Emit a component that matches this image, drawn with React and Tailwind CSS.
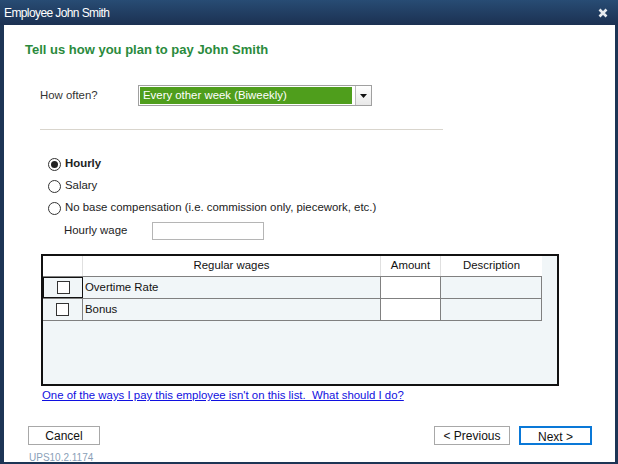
import React from "react";

const Radio = ({ checked, label, bold }) => (
  <div className="flex items-center h-[22px] shrink-0">
    <span className="w-[13px] h-[13px] rounded-full border border-[#333] bg-white flex items-center justify-center">
      {checked && <span className="w-[7px] h-[7px] rounded-full bg-[#222]" />}
    </span>
    <span className={"ml-[4px] text-[#222] " + (bold ? "font-bold" : "")}>{label}</span>
  </div>
);

const Check = () => <span className="w-[13px] h-[13px] border border-[#333] bg-white block" />;

export default function App() {
  return (
    <div
      className="w-[618px] h-[464px] flex flex-col bg-[#1d3555] overflow-hidden"
      style={{ fontFamily: '"Liberation Sans", Arial, sans-serif' }}
    >
      <div className="h-[25px] shrink-0 flex items-center justify-between pl-[4px] pr-[10px] bg-gradient-to-b from-[#284c74] to-[#1b3152]">
        <span className="text-white text-[12px] tracking-[-0.6px] leading-none">Employee John Smith</span>
        <svg width="10" height="10" viewBox="0 0 10 10">
          <path d="M1.5 1.5 L8.5 8.5 M8.5 1.5 L1.5 8.5" stroke="#e8ecf0" strokeWidth="2.6" strokeLinecap="butt" />
        </svg>
      </div>
      <div className="flex-1 min-h-0 ml-[4px] mr-[3px] mb-[2px] bg-white relative flex flex-col text-[11.4px] text-[#333] overflow-hidden">
        <div className="shrink-0 pl-[21px] pt-[17px] text-[#2a8a3c] font-bold text-[13px] leading-[16px]">
          Tell us how you plan to pay John Smith
        </div>
        <div className="shrink-0 flex items-center mt-[27px] pl-[36px]">
          <span className="w-[98px]">How often?</span>
          <div className="flex h-[21px] border border-[#a0a0a0] bg-white items-stretch w-[234px]">
            <div className="m-[1px] w-[212px] bg-[#4f9e1c] text-white pl-[3px] flex items-center">
              Every other week (Biweekly)
            </div>
            <div className="ml-auto w-[16px] border-l border-[#bbb] bg-gradient-to-b from-white to-[#e8e8e8] flex items-center justify-center">
              <svg width="7" height="4" viewBox="0 0 7 4"><path d="M0 0 H7 L3.5 4 Z" fill="#111" /></svg>
            </div>
          </div>
        </div>
        <div className="shrink-0 ml-[36px] w-[403px] h-px bg-[#d9d5cd] mt-[23px]" />
        <div className="shrink-0 pl-[44px] mt-[23px] flex flex-col">
          <Radio checked bold label="Hourly" />
          <Radio label="Salary" />
          <Radio label="No base compensation (i.e. commission only, piecework, etc.)" />
          <div className="flex items-center h-[24px] pl-[16px] shrink-0">
            <span className="w-[88px] text-[#222]">Hourly wage</span>
            <div className="w-[112px] h-[18px] border border-[#b5b5b5] bg-white" />
          </div>
        </div>
        <div className="ml-[37px] mt-[11px] w-[518px] h-[132px] shrink-0 border-2 border-[#111] bg-[#f1f6f8] flex flex-col">
          <div className="flex h-[21px] shrink-0 bg-white w-[499px] text-[#111] border-b border-[#808080]">
            <div className="w-[40px] border-r border-[#e0e0e0]" />
            <div className="w-[298px] border-r border-[#e0e0e0] flex items-center justify-center">Regular wages</div>
            <div className="w-[60px] border-r border-[#e0e0e0] flex items-center justify-center">Amount</div>
            <div className="flex-1 flex items-center justify-center">Description</div>
          </div>
          {["Overtime Rate", "Bonus"].map((r, i) => (
            <div key={r} className="flex h-[22px] shrink-0 w-[499px] border-b border-[#808080] text-[#111]">
              <div className={"w-[40px] flex items-center justify-center " + (i === 0 ? "border border-[#111]" : "border-r border-[#808080]")}>
                <Check />
              </div>
              <div className="w-[298px] border-r border-[#808080] flex items-center pl-[2px]">{r}</div>
              <div className="w-[60px] border-r border-[#808080] bg-white" />
              <div className="flex-1 border-r border-[#808080]" />
            </div>
          ))}
        </div>
        <div className="shrink-0 ml-[38px] mt-[1px] leading-[16px]">
          <a className="text-[#1010e0] underline" href="#">
            One of the ways I pay this employee isn't on this list.&nbsp; What should I do?
          </a>
        </div>
        <div className="shrink-0 flex items-center mt-[23px] pl-[24px] pr-[23px]">
          <button className="w-[72px] h-[19px] border border-[#a8a8a8] bg-white text-[#111] text-[12px]">Cancel</button>
          <button className="ml-auto w-[76px] h-[19px] border border-[#a8a8a8] bg-white text-[#111] text-[12px]">&lt; Previous</button>
          <button className="ml-[9px] w-[73px] h-[19px] border-2 border-[#0a78d7] bg-white text-[#111] text-[12px]">Next &gt;</button>
        </div>
        <div className="shrink-0 pl-[25px] mt-[8px] text-[10px] text-[#8aa0b8] leading-none">UPS10.2.1174</div>
      </div>
    </div>
  );
}
